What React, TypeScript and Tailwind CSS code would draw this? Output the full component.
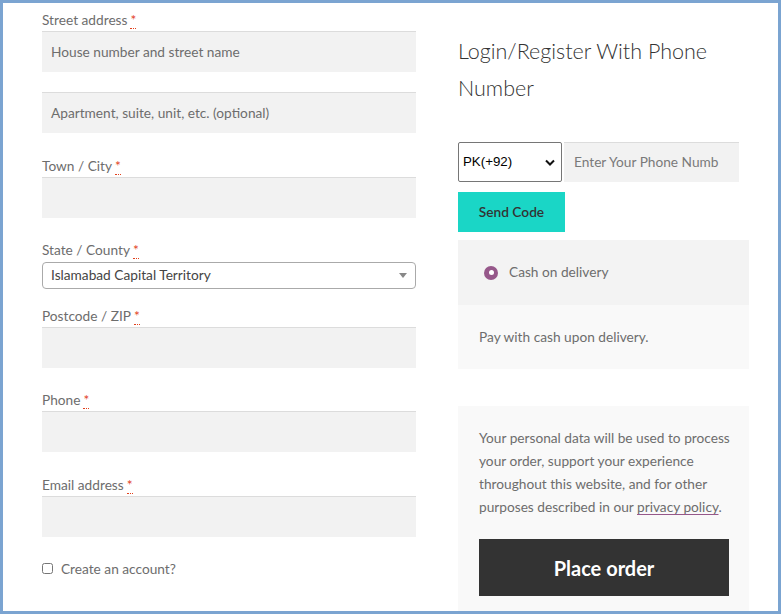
import React from 'react';

const Req = () => (
  <abbr title="required" className="ml-[3px] text-[#e2401c] no-underline border-b border-dotted border-[#e2401c] leading-none">*</abbr>
);

const Field = ({ label, placeholder, mb = 'mb-[20px]' }: { label: string; placeholder?: string; mb?: string }) => (
  <div className={mb}>
    <label className="block h-[23px] leading-[23px]">
      {label}
      <Req />
    </label>
    <div className="h-[41px] bg-[#f2f2f2] border-t border-[#dcdcdc] flex items-center px-[9px] text-[#6d6d6d]">
      {placeholder}
    </div>
  </div>
);

export default function App() {
  return (
    <div
      className="w-[781px] h-[614px] overflow-hidden border-[3px] border-[#7ba4d1] bg-white text-[#6d6d6d] text-[13.7px]"
      style={{ fontFamily: 'Lato, "Noto Sans", sans-serif' }}
    >
      <div className="flex pl-[39px] pt-[5px]">
        {/* Billing fields */}
        <div className="w-[374px] shrink-0">
          <div className="mb-[21px]">
            <label className="block h-[23px] leading-[23px]">
              Street address
              <Req />
            </label>
            <div className="h-[41px] bg-[#f2f2f2] border-t border-[#dcdcdc] flex items-center px-[9px]">
              House number and street name
            </div>
            <div className="mt-[20px] h-[41px] bg-[#f2f2f2] border-t border-[#dcdcdc] flex items-center px-[9px]">
              Apartment, suite, unit, etc. (optional)
            </div>
          </div>

          <Field label="Town / City" />

          <div className="mb-[15px]">
            <label className="block h-[23px] leading-[23px]">
              State / County
              <Req />
            </label>
            <div className="mt-[1px] h-[27px] border border-[#aaaaaa] rounded-[4px] flex items-center justify-between pl-[8px] pr-[8px] text-[#444]">
              <span>Islamabad Capital Territory</span>
              <svg width="8" height="5" viewBox="0 0 8 5">
                <path d="M0 0h8L4 5z" fill="#888" />
              </svg>
            </div>
          </div>

          <Field label="Postcode / ZIP" />
          <Field label="Phone" mb="mb-[21px]" />
          <Field label="Email address" />

          <label className="flex items-center h-[23px] leading-[23px]">
            <input type="checkbox" className="w-[11px] h-[11px] m-0 mr-[8px] ml-[0px]" />
            Create an account?
          </label>
        </div>

        {/* Right column */}
        <div className="w-[291px] ml-[42px] shrink-0">
          <h3 className="mt-[25px] text-[21.5px] leading-[37px] font-light text-[#333]">
            Login/Register With Phone Number
          </h3>

          <div className="mt-[35px] flex items-stretch h-[40px]">
            <div
              className="w-[104px] border border-[#767676] rounded-[2px] flex items-center justify-between pl-[4px] pr-[6px] text-black text-[13.3px] bg-white"
              style={{ fontFamily: '"Liberation Sans", Arial, sans-serif' }}
            >
              <span>PK(+92)</span>
              <svg width="10" height="7" viewBox="0 0 10 7">
                <path d="M1 1.5l4 4 4-4" fill="none" stroke="#111" strokeWidth="2" />
              </svg>
            </div>
            <div className="ml-[2px] w-[175px] bg-[#f2f2f2] border-t border-[#dcdcdc] flex items-center pl-[10px] overflow-hidden whitespace-nowrap text-[#7a7a7a]">
              Enter Your Phone Numb
            </div>
          </div>

          <button className="mt-[10px] w-[107px] h-[40px] bg-[#1ad6c6] text-[#333] font-semibold">
            Send Code
          </button>

          <div className="mt-[8px] bg-[#f3f3f3] h-[65px] flex items-center pl-[26px]">
            <span className="w-[14px] h-[14px] rounded-full bg-[#96588a] flex items-center justify-center">
              <span className="w-[5px] h-[5px] rounded-full bg-white" />
            </span>
            <span className="ml-[11px]">Cash on delivery</span>
          </div>
          <div className="bg-[#f9f9f9] h-[64px] flex items-center pl-[21px]">
            Pay with cash upon delivery.
          </div>

          <div className="mt-[37px] bg-[#f9f9f9] pt-[20px] pl-[21px] pr-[20px] h-[220px]">
            <p className="leading-[23px] mr-[-8px]">
              Your personal data will be used to process your order, support your experience throughout this website, and for other purposes described in our{' '}
              <a className="underline decoration-[#96588a] underline-offset-2">privacy policy</a>.
            </p>
            <button className="mt-[21px] w-full h-[57px] bg-[#333] text-white text-[20px] font-bold">
              Place order
            </button>
          </div>
        </div>
      </div>
    </div>
  );
}
